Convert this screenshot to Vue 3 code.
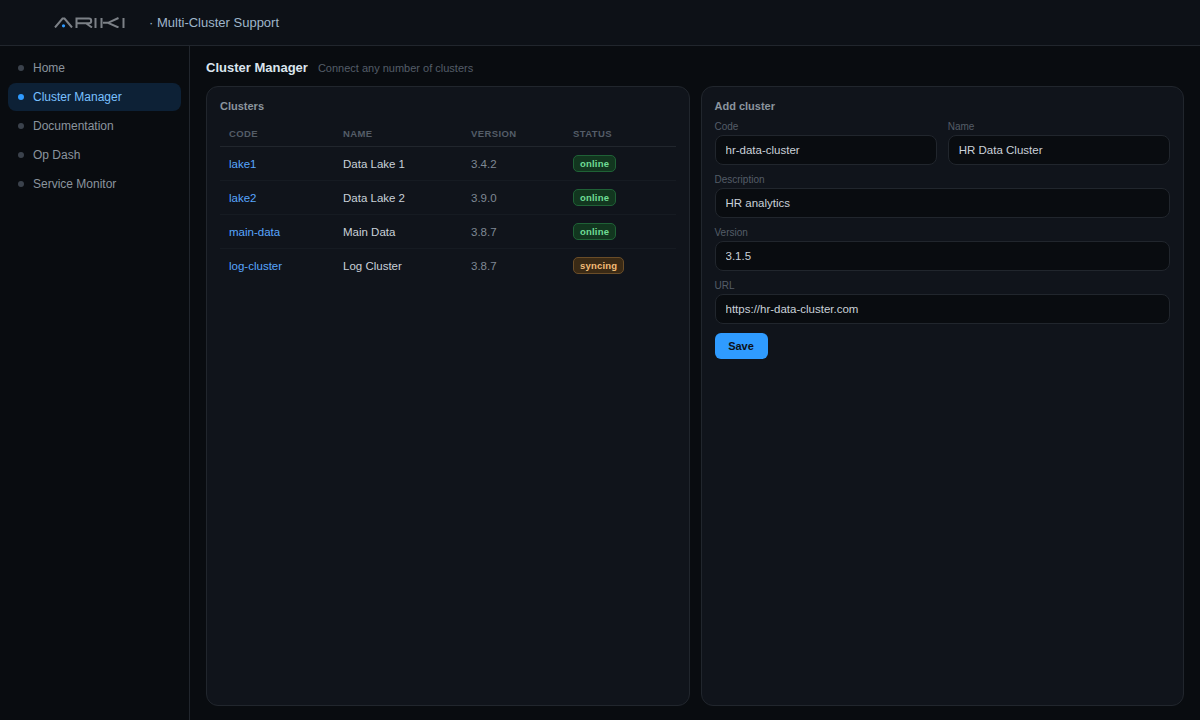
<script setup>
const navItems = [
  { label: "Home" },
  { label: "Cluster Manager", active: true },
  { label: "Documentation" },
  { label: "Op Dash" },
  { label: "Service Monitor" },
]

const clusters = [
  { code: "lake1", name: "Data Lake 1", version: "3.4.2", status: "online" },
  { code: "lake2", name: "Data Lake 2", version: "3.9.0", status: "online" },
  { code: "main-data", name: "Main Data", version: "3.8.7", status: "online" },
  { code: "log-cluster", name: "Log Cluster", version: "3.8.7", status: "syncing" },
]
</script>

<template>
  <div class="app">
    <header class="topbar">
      <svg class="logo" width="72" height="11" viewBox="0 0 72 11" fill="none" stroke="#7c8187" stroke-width="2">
        <path d="M1 10.5 L8.5 1.6 H10.5 L18 10.5" />
        <circle cx="9.5" cy="8.8" r="1.6" fill="#2f9bff" stroke="none" />
        <path d="M22.5 11 V1.6 H35 Q37.2 1.6 37.2 3.9 Q37.2 6.2 35 6.2 H23.5 M32 6.2 L38 10.5" />
        <path d="M41.5 1 V11" />
        <path d="M47.5 1 V11 M49 5.8 H54 L64.5 1 M54 5.8 L64.5 10.5" />
        <path d="M69.5 1 V11" />
      </svg>
      <span class="tagline">· Multi-Cluster Support</span>
    </header>

    <div class="body">
      <nav class="sidebar">
        <a v-for="item in navItems" :key="item.label" class="nav-item" :class="{ active: item.active }">
          <span class="dot"></span>
          {{ item.label }}
        </a>
      </nav>

      <main class="main">
        <div class="page-head">
          <h1>Cluster Manager</h1>
          <span class="sub">Connect any number of clusters</span>
        </div>

        <div class="cards">
          <section class="card">
            <h2>Clusters</h2>
            <table>
              <thead>
                <tr>
                  <th class="col-code">Code</th>
                  <th class="col-name">Name</th>
                  <th class="col-version">Version</th>
                  <th>Status</th>
                </tr>
              </thead>
              <tbody>
                <tr v-for="c in clusters" :key="c.code">
                  <td class="code">{{ c.code }}</td>
                  <td class="name">{{ c.name }}</td>
                  <td class="version">{{ c.version }}</td>
                  <td class="status"><span class="badge" :class="c.status">{{ c.status }}</span></td>
                </tr>
              </tbody>
            </table>
          </section>

          <section class="card">
            <h2>Add cluster</h2>
            <form class="form" @submit.prevent>
              <div class="row">
                <label class="field">
                  <span>Code</span>
                  <input value="hr-data-cluster" />
                </label>
                <label class="field">
                  <span>Name</span>
                  <input value="HR Data Cluster" />
                </label>
              </div>
              <label class="field">
                <span>Description</span>
                <input value="HR analytics" />
              </label>
              <label class="field">
                <span>Version</span>
                <input value="3.1.5" />
              </label>
              <label class="field">
                <span>URL</span>
                <input value="https://hr-data-cluster.com" />
              </label>
              <button class="save" type="submit">Save</button>
            </form>
          </section>
        </div>
      </main>
    </div>
  </div>
</template>

<style>
body {
  background: #090c10;
}
</style>

<style scoped>
.app {
  height: 720px;
  display: flex;
  flex-direction: column;
  overflow: hidden;
  background: #090c10;
  color: #c9d1d9;
  font-family: "Liberation Sans", Arial, sans-serif;
}

.topbar {
  height: 45px;
  flex: none;
  display: flex;
  align-items: center;
  padding-left: 54px;
  background: #0d1117;
  border-bottom: 1px solid #21262d;
}

.logo {
  display: block;
  margin-right: 23px;
}

.tagline {
  font-size: 13px;
  color: #9fb6cb;
}

.body {
  flex: 1;
  display: flex;
  min-height: 0;
}

.sidebar {
  width: 190px;
  flex: none;
  box-sizing: border-box;
  padding: 8px;
  display: flex;
  flex-direction: column;
  gap: 1px;
  border-right: 1px solid #21262d;
}

.nav-item {
  height: 28px;
  display: flex;
  align-items: center;
  gap: 9px;
  padding-left: 10px;
  border-radius: 8px;
  font-size: 12px;
  color: #8b949e;
}

.dot {
  width: 6px;
  height: 6px;
  border-radius: 50%;
  background: #3b424c;
}

.nav-item.active {
  background: #0d2136;
  color: #79c0ff;
}

.nav-item.active .dot {
  background: #2f9bff;
}

.main {
  flex: 1;
  min-width: 0;
  padding: 14px 16px;
  display: flex;
  flex-direction: column;
}

.page-head {
  display: flex;
  align-items: baseline;
  gap: 10px;
  height: 26px;
}

h1 {
  margin: 0;
  font-size: 13px;
  font-weight: 700;
  color: #dbe5ee;
}

.sub {
  font-size: 11px;
  color: #545d68;
}

.cards {
  flex: 1;
  display: grid;
  grid-template-columns: 1fr 1fr;
  gap: 11px;
  min-height: 0;
}

.card {
  background: #10141b;
  border: 1px solid #21262d;
  border-radius: 12px;
  padding: 13px;
}

h2 {
  margin: 0;
  font-size: 11px;
  font-weight: 700;
  color: #8b949e;
  line-height: 13px;
}

table {
  width: 100%;
  margin-top: 6px;
  border-collapse: collapse;
  table-layout: fixed;
}

th {
  box-sizing: border-box;
  height: 27px;
  padding: 3px 9px 0;
  text-align: left;
  font-size: 9.5px;
  font-weight: 700;
  letter-spacing: 0.4px;
  text-transform: uppercase;
  color: #545d68;
  border-bottom: 1px solid #21262d;
}

.col-code {
  width: 114px;
}

.col-name {
  width: 128px;
}

.col-version {
  width: 102px;
}

td {
  box-sizing: border-box;
  height: 34px;
  padding: 2px 9px 0;
  font-size: 11.5px;
  border-bottom: 1px solid #161b22;
}

td.status {
  padding-top: 0;
}

tbody tr:last-child td {
  border-bottom: none;
}

.code {
  color: #58a6ff;
}

.name {
  color: #c9d1d9;
}

.version {
  color: #7f8894;
}

.badge {
  display: block;
  width: fit-content;
  padding: 0 6px;
  height: 17px;
  line-height: 15px;
  box-sizing: border-box;
  border-radius: 5px;
  font-size: 9.5px;
  font-weight: 700;
  letter-spacing: 0.2px;
  border: 1px solid;
}

.badge.online {
  background: #12361f;
  border-color: #1f6136;
  color: #6fdc95;
}

.badge.syncing {
  background: #3a2a15;
  border-color: #6a4d28;
  color: #f3bd78;
}

.form {
  margin-top: 7px;
  display: flex;
  flex-direction: column;
  gap: 8px;
}

.row {
  display: grid;
  grid-template-columns: 1fr 1fr;
  gap: 11px;
}

.field {
  display: flex;
  flex-direction: column;
  min-width: 0;
}

.field span {
  font-size: 10px;
  line-height: 14px;
  margin-bottom: 1px;
  color: #545d68;
}

input {
  height: 30px;
  box-sizing: border-box;
  width: 100%;
  padding: 0 10px;
  background: #090c10;
  border: 1px solid #21262d;
  border-radius: 8px;
  color: #c9d1d9;
  font: 11.5px "Liberation Sans", Arial, sans-serif;
  outline: none;
}

.save {
  align-self: flex-start;
  margin-top: 1px;
  width: 53px;
  height: 26px;
  padding: 0;
  border: none;
  border-radius: 6px;
  background: #2f9bff;
  color: #0d1117;
  font: 700 11px "Liberation Sans", Arial, sans-serif;
}
</style>
